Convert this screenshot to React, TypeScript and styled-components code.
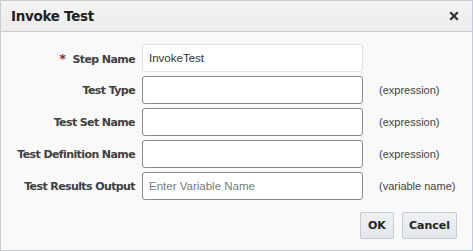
import React from "react";
import styled, { createGlobalStyle } from "styled-components";

const Global = createGlobalStyle`
  html, body { margin: 0; padding: 0; background: #ffffff; }
  * { box-sizing: border-box; }
`;

const Dialog = styled.div`
  width: 473px;
  height: 251px;
  border: 1px solid #c3cdd7;
  background: #f9f9f9;
  display: flex;
  flex-direction: column;
  font-family: "DejaVu Sans", Verdana, sans-serif;
  color: #333;
`;

const Header = styled.div`
  height: 31px;
  flex: none;
  display: flex;
  align-items: center;
  justify-content: space-between;
  padding: 0 12px 0 10px;
  background: linear-gradient(#f4f4f4, #ececec);
  border-bottom: 1px solid #c3cdd7;
`;

const Title = styled.h1`
  margin: 0;
  font-size: 13.5px;
  font-weight: bold;
  color: #222;
  letter-spacing: -0.3px;
`;

const Close = styled.button`
  width: 12px;
  height: 12px;
  padding: 0;
  border: 0;
  background: none;
  display: flex;
  align-items: center;
  justify-content: center;
`;

const Body = styled.div`
  flex: 1;
  display: flex;
  flex-direction: column;
  padding: 12px 15px 0 0;
`;

const Form = styled.div`
  display: grid;
  grid-template-columns: 134px 221px 1fr;
  column-gap: 7px;
  row-gap: 4px;
  align-items: center;
`;

const Label = styled.label`
  justify-self: end;
  font-size: 11px;
  font-weight: bold;
  color: #404040;
  letter-spacing: -0.6px;
  white-space: nowrap;
`;

const Star = styled.span`
  color: #8b2a1c;
  font-size: 13px;
  margin-right: 7px;
`;

const Input = styled.input<{ $soft?: boolean }>`
  width: 221px;
  height: 28px;
  padding: 0 6px;
  border: 1px solid ${(p) => (p.$soft ? "#dde2e8" : "#8a8a8a")};
  border-radius: 3px;
  background: #fff;
  font-family: "Liberation Sans", Arial, sans-serif;
  font-size: 11.5px;
  color: #333;
  outline: none;
  &::placeholder { color: #7a7a7a; }
`;

const Hint = styled.span`
  font-family: "Liberation Sans", Arial, sans-serif;
  font-size: 11px;
  color: #444;
  margin-left: 9px;
  white-space: nowrap;
`;

const Footer = styled.div`
  display: flex;
  justify-content: flex-end;
  gap: 8px;
  margin-top: 12px;
`;

const Button = styled.button`
  height: 27px;
  min-width: 34px;
  padding: 0 6px;
  border: 1px solid #c4ccd4;
  border-radius: 2px;
  background: linear-gradient(#eef1f4, #e3e7eb);
  font-family: "DejaVu Sans", Verdana, sans-serif;
  font-size: 11px;
  font-weight: bold;
  color: #222;
`;

const rows = [
  { label: "Test Type", hint: "(expression)" },
  { label: "Test Set Name", hint: "(expression)" },
  { label: "Test Definition Name", hint: "(expression)" },
  { label: "Test Results Output", hint: "(variable name)", placeholder: "Enter Variable Name" },
];

export default function App() {
  return (
    <>
      <Global />
      <Dialog>
        <Header>
          <Title>Invoke Test</Title>
          <Close aria-label="Close">
            <svg width="10" height="10" viewBox="0 0 10 10">
              <path d="M1.2 1.2 L8.8 8.8 M8.8 1.2 L1.2 8.8" stroke="#333" strokeWidth="2.2" />
            </svg>
          </Close>
        </Header>
        <Body>
          <Form>
            <Label><Star>*</Star>Step Name</Label>
            <Input $soft defaultValue="InvokeTest" />
            <span />
            {rows.map((r) => (
              <React.Fragment key={r.label}>
                <Label>{r.label}</Label>
                <Input placeholder={r.placeholder} />
                <Hint>{r.hint}</Hint>
              </React.Fragment>
            ))}
          </Form>
          <Footer>
            <Button>OK</Button>
            <Button>Cancel</Button>
          </Footer>
        </Body>
      </Dialog>
    </>
  );
}
